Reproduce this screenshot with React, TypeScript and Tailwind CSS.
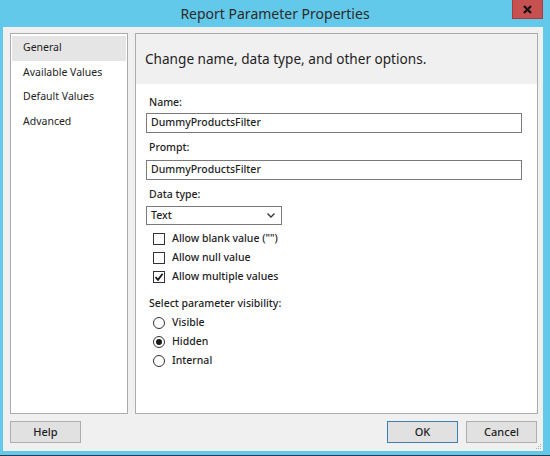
import React from 'react';

const navItems = ['General', 'Available Values', 'Default Values', 'Advanced'];

const CheckRow: React.FC<{ label: string; checked?: boolean }> = ({ label, checked }) => (
  <div className="h-[19px] flex items-center pl-[7px]">
    <span className="w-[12px] h-[12px] border border-[#333333] bg-white flex items-center justify-center">
      {checked && (
        <svg width="10" height="10" viewBox="0 0 10 10">
          <path d="M1.5 5.2 L4 7.8 L8.6 1.8" fill="none" stroke="#1a1a1a" strokeWidth="1.8" />
        </svg>
      )}
    </span>
    <span className="ml-[7px]">{label}</span>
  </div>
);

const RadioRow: React.FC<{ label: string; checked?: boolean }> = ({ label, checked }) => (
  <div className="h-[19px] flex items-center pl-[7px]">
    <span className="w-[12px] h-[12px] rounded-full border border-[#333333] bg-white flex items-center justify-center">
      {checked && <span className="w-[6px] h-[6px] rounded-full bg-[#1a1a1a]" />}
    </span>
    <span className="ml-[7px]">{label}</span>
  </div>
);

const Button: React.FC<{ label: string; primary?: boolean }> = ({ label, primary }) => (
  <button
    className={`w-[71px] h-[22px] bg-[#e1e1e1] border text-[11px] font-medium text-[#1e1e1e] flex items-center justify-center ${
      primary ? 'border-[#3c7fb1]' : 'border-[#adadad]'
    }`}
  >
    {label}
  </button>
);

export default function App() {
  return (
    <div className="w-[550px] h-[456px] bg-[#63c9ea] flex flex-col border-b border-[#2f3b44] font-['Noto_Sans','Open_Sans',sans-serif] text-[#1e1e1e] overflow-hidden">
      {/* title bar */}
      <div className="h-[27px] relative flex items-center justify-center shrink-0">
        <span className="text-[14px] text-[#2b2b2b] -mt-[1px]">Report Parameter Properties</span>
        <div className="absolute right-[7px] top-0 w-[31px] h-[19px] bg-[#c75050] border-x border-b border-[#a83c3c] flex items-center justify-center">
          <svg width="9" height="9" viewBox="0 0 9 9">
            <path d="M1 1 L8 8 M8 1 L1 8" stroke="#111" strokeWidth="2.2" />
          </svg>
        </div>
      </div>

      {/* body */}
      <div className="flex-1 ml-[3px] mr-[7px] mb-[4px] bg-[#f0f0f0] flex flex-col pt-[6px] pl-[7px] pr-[5px] pb-[8px] relative">
        <div className="flex-1 flex gap-[7px] min-h-0">
          {/* nav list */}
          <div className="w-[118px] bg-white border border-[#acacac] pt-[2px] px-[1px] text-[10.5px]">
            {navItems.map((item, i) => (
              <div
                key={item}
                className={`h-[24.5px] flex items-center pl-[11px] ${i === 0 ? 'bg-[#e5e5e5]' : ''}`}
              >
                {item}
              </div>
            ))}
          </div>

          {/* main panel */}
          <div className="flex-1 bg-white border border-[#acacac] flex flex-col">
            <div className="h-[50px] bg-[#f0f0f0] flex items-center pl-[9px] text-[13.6px] text-[#1e1e1e]">
              Change name, data type, and other options.
            </div>
            <div className="pl-[10px] pr-[15px] pt-[11px] text-[10.5px] font-medium">
              <div className="h-[14px] leading-[14px] pl-[3px]">Name:</div>
              <div className="mt-[4px] h-[20px] border border-[#7a7a7a] bg-white flex items-center pl-[4px]">
                DummyProductsFilter
              </div>
              <div className="mt-[7px] h-[14px] leading-[14px] pl-[3px]">Prompt:</div>
              <div className="mt-[6px] h-[20px] border border-[#7a7a7a] bg-white flex items-center pl-[4px]">
                DummyProductsFilter
              </div>
              <div className="mt-[7px] h-[14px] leading-[14px] pl-[3px]">Data type:</div>
              <div className="mt-[5px] w-[136px] h-[19px] border border-[#7a7a7a] bg-white flex items-center justify-between pl-[4px] pr-[6px]">
                <span>Text</span>
                <svg width="8" height="5" viewBox="0 0 8 5">
                  <path d="M0.5 0.5 L4 4 L7.5 0.5" fill="none" stroke="#333" strokeWidth="1.3" />
                </svg>
              </div>
              <div className="mt-[4px]">
                <CheckRow label={'Allow blank value ("")'} />
                <CheckRow label="Allow null value" />
                <CheckRow label="Allow multiple values" checked />
              </div>
              <div className="mt-[10px] h-[14px] leading-[14px] pl-[3px]">Select parameter visibility:</div>
              <div className="mt-[3.5px]">
                <RadioRow label="Visible" />
                <RadioRow label="Hidden" checked />
                <RadioRow label="Internal" />
              </div>
            </div>
          </div>
        </div>

        {/* buttons */}
        <div className="mt-[7px] h-[22px] flex items-center justify-between shrink-0">
          <Button label="Help" />
          <div className="flex gap-[8px] pr-[1px]">
            <Button label="OK" primary />
            <Button label="Cancel" />
          </div>
        </div>

        {/* size grip */}
        <svg className="absolute right-[1px] bottom-[1px]" width="7" height="7" viewBox="0 0 7 7">
          <rect x="5" y="1" width="1" height="1" fill="#b5b5b5" />
          <rect x="3" y="3" width="1" height="1" fill="#b5b5b5" />
          <rect x="5" y="3" width="1" height="1" fill="#b5b5b5" />
          <rect x="1" y="5" width="1" height="1" fill="#b5b5b5" />
          <rect x="3" y="5" width="1" height="1" fill="#b5b5b5" />
          <rect x="5" y="5" width="1" height="1" fill="#b5b5b5" />
        </svg>
      </div>
    </div>
  );
}
